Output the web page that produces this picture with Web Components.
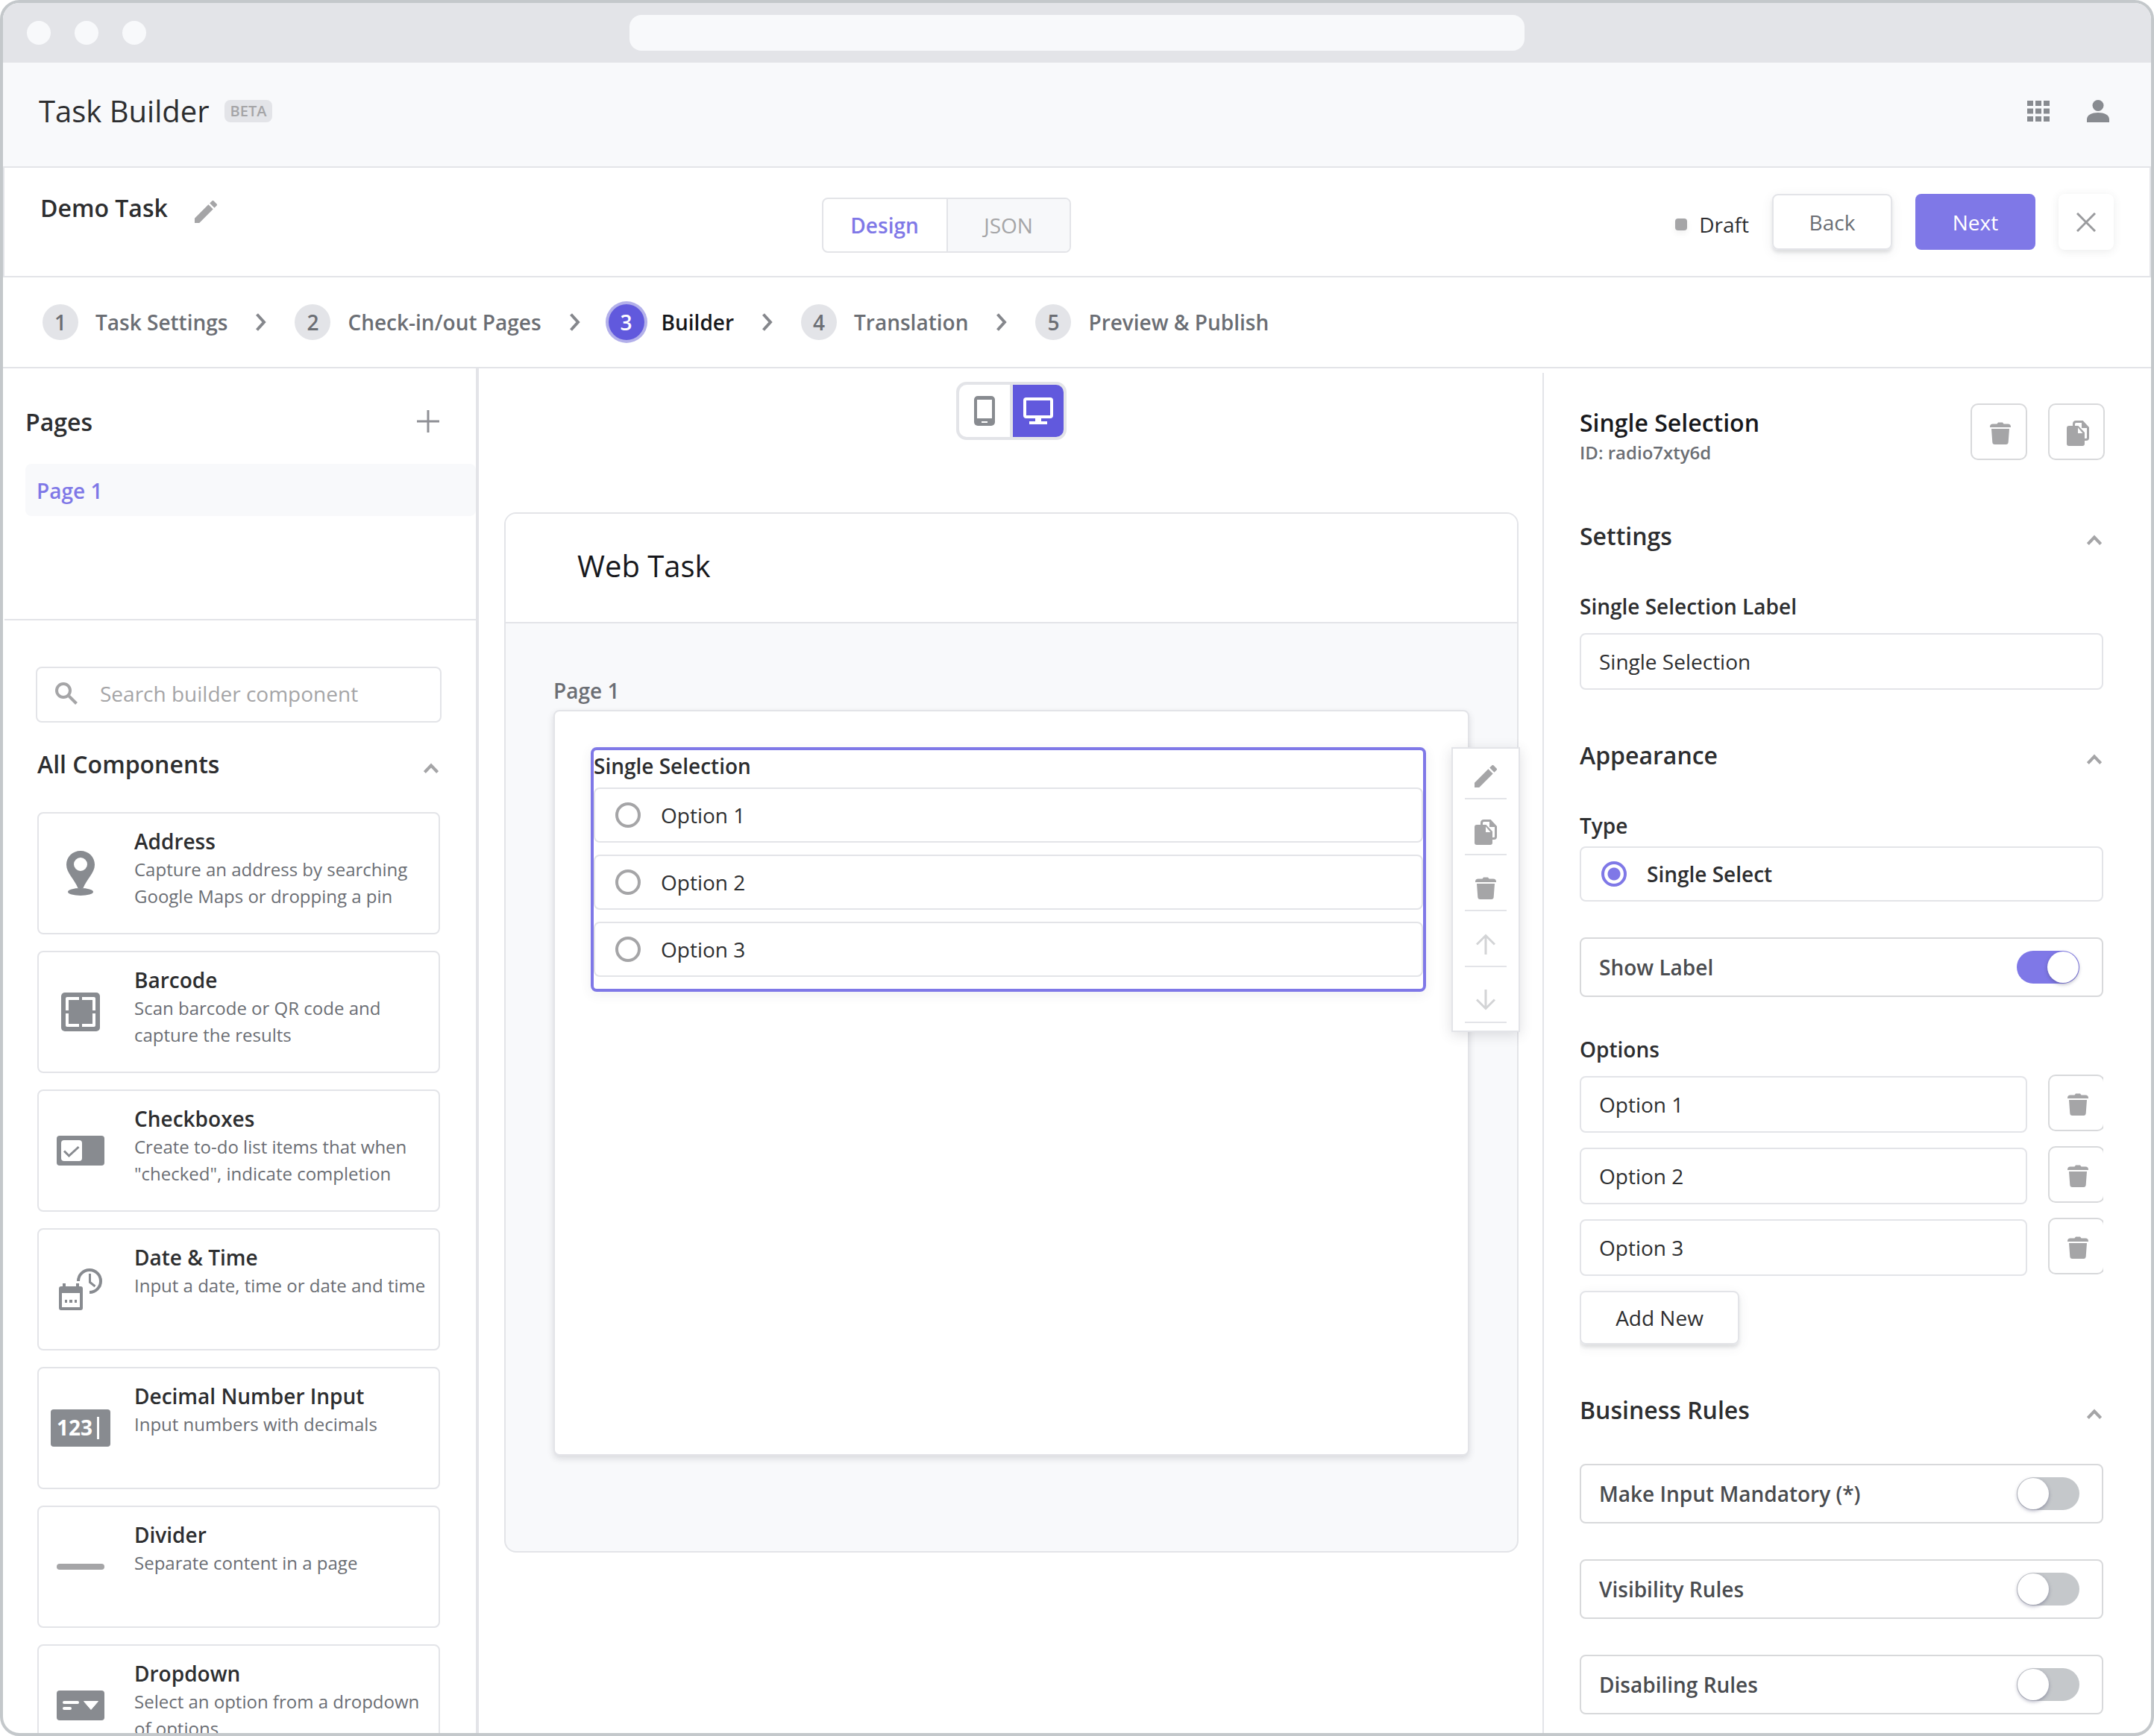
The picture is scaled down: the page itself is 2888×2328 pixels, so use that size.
<!DOCTYPE html>
<html lang="en">
<head>
<meta charset="utf-8">
<title>Task Builder</title>
<style>
  :root {
    --accent: #7f78e7;
    --accent-deep: #6159dd;
    --line: #e3e4e8;
    --line-strong: #d8d9db;
    --surface: #f8f9fb;
    --ink: #2d2e30;
    --ink-soft: #4a4c50;
    --muted: #6b6e74;
    --faint: #a5a5a7;
    --icon: #888b90;
  }
  body { margin: 0; background: #fff; color: var(--ink); font: 28px/40px "Open Sans", "Noto Sans", sans-serif; }
</style>
</head>
<body>
<app-window>
  <app-header></app-header>
  <task-bar></task-bar>
  <step-nav></step-nav>
  <builder-body>
    <builder-sidebar slot="left">
      <component-card icon="pin"><span slot="title">Address</span>Capture an address by searching Google Maps or dropping a pin</component-card>
      <component-card icon="barcode"><span slot="title">Barcode</span>Scan barcode or QR code and capture the results</component-card>
      <component-card icon="checkboxes"><span slot="title">Checkboxes</span>Create to-do list items that when "checked", indicate completion</component-card>
      <component-card icon="datetime"><span slot="title">Date &amp; Time</span>Input a date, time or date and time</component-card>
      <component-card icon="number"><span slot="title">Decimal Number Input</span>Input numbers with decimals</component-card>
      <component-card icon="divider"><span slot="title">Divider</span>Separate content in a page</component-card>
      <component-card icon="dropdown"><span slot="title">Dropdown</span>Select an option from a dropdown of options</component-card>
    </builder-sidebar>
    <design-canvas></design-canvas>
    <settings-panel slot="right"></settings-panel>
  </builder-body>
</app-window>

<script>
const ICONS = {
  pencil: [30, 30, '<svg viewBox="3 3 18 18" width="30" height="30" fill="currentColor"><path d="M3 17.25V21h3.75L17.81 9.94l-3.75-3.75L3 17.25zM20.71 7.04a1 1 0 0 0 0-1.41l-2.34-2.34a1 1 0 0 0-1.41 0l-1.83 1.83 3.75 3.75 1.83-1.83z"/></svg>'],
  trash: [28, 30, '<path fill="currentColor" d="M4 2.5h5.500l1.500-2h6l1.500 2H24q4 0 4 4v.5H0v-.5q0-4 4-4zM2 9h24l-1.300 17.800Q24.500 30 21.500 30h-15Q3.500 30 3.300 26.800z"/>'],
  copy: [30, 34, '<path fill="none" stroke="currentColor" stroke-width="3" d="M9.500 7V4.500q0-3 3-3H21l7.500 8V23q0 2.500-2.500 2.500h-2"/><path fill="currentColor" d="M20 1v9h9zM3 7h12.500L24 16v15q0 3-3 3H3q-3 0-3-3V10q0-3 3-3z"/><path fill="#fff" d="M15 9.500l6.500 7.500H15z"/>'],
  search: [30, 30, '<g fill="none" stroke="currentColor" stroke-width="4"><circle cx="11" cy="11" r="9"/><path d="M18.500 18.500L28.500 28.500"/></g>'],
  plus: [30, 30, '<path stroke="currentColor" stroke-width="3" d="M15 0v30M0 15h30"/>'],
  close: [26, 26, '<path stroke="currentColor" stroke-width="3" d="M1 1l24 24M25 1L1 25"/>'],
  chevronRight: [14, 24, '<path fill="none" stroke="currentColor" stroke-width="4" d="M1.500 1.500L11 12 1.500 22.500"/>'],
  chevronUp: [20, 24, '<path fill="none" stroke="currentColor" stroke-width="4" d="M1.400 22.500L10 13.500l8.600 9"/>'],
  arrowUp: [26, 28, '<path fill="none" stroke="currentColor" stroke-width="3" d="M1 14.500L13 2.500l12 12M13 2.500V28"/>'],
  arrowDown: [26, 28, '<path fill="none" stroke="currentColor" stroke-width="3" d="M1 13.500l12 12 12-12M13 25.500V0"/>'],
  grid: [30, 28, [0, 11, 22].map(x => [0, 10.5, 21].map(y => `<rect x="${x}" y="${y}" width="8" height="7" fill="currentColor"/>`).join('')).join('')],
  person: [30, 30, '<circle cx="15" cy="7.500" r="7.500" fill="currentColor"/><path fill="currentColor" d="M0 30v-4c0-6 7-9 15-9s15 3 15 9v4z"/>'],
  tablet: [28, 40, '<rect width="28" height="40" rx="5" fill="currentColor"/><path fill="#fff" d="M4 5h20v25H4zM10 34h8v2h-8z"/>'],
  monitor: [40, 36, '<rect x="2" y="2" width="36" height="24" rx="2" fill="none" stroke="currentColor" stroke-width="4"/><path fill="currentColor" d="M16 27h8v5h8v4H8v-4h8z"/>'],
  pin: [38, 60, '<path fill="currentColor" fill-rule="evenodd" d="M19 0C8.500 0 0 8 0 18.500 0 30 11 38 15.500 50h7C27 38 38 30 38 18.500 38 8 29.500 0 19 0zm0 9a9 9 0 1 1 0 18 9 9 0 0 1 0-18z"/><ellipse cx="19" cy="55" rx="17" ry="5" fill="currentColor"/>'],
  barcode: [52, 52, '<rect width="52" height="52" rx="5" fill="currentColor"/><path fill="none" stroke="#fff" stroke-width="4" stroke-linejoin="round" d="M24 8H8v16M28 8h16v16M8 28v16h16M44 28v16H28"/>'],
  checkboxes: [64, 40, '<rect width="64" height="40" rx="4" fill="currentColor"/><rect x="6" y="6" width="28" height="28" rx="4" fill="#fff"/><path fill="none" stroke="currentColor" stroke-width="3" d="M10 20.500l6.500 6.500L29.500 15"/>'],
  datetime: [58, 58, '<path fill="none" stroke="currentColor" stroke-width="4" d="M26 18a15 15 0 1 1 15 15"/><path fill="none" stroke="currentColor" stroke-width="3" d="M41.500 8v11.500l7 5.500"/><path fill="currentColor" fill-rule="evenodd" d="M5 21h4v4h14v-4h4v4h2q3 0 3 3v26q0 3-3 3H3q-3 0-3-3V28q0-3 3-3h2zM4 34v19h24V34z"/><path fill="currentColor" d="M8 43h3v4H8zM14 43h4v4h-4zM21 43h3v4h-3z"/>'],
  number: [80, 50, '<rect width="80" height="50" rx="4" fill="currentColor"/><text x="8" y="35" fill="#fff" font-size="28" font-weight="700">123</text><rect x="62" y="10" width="3" height="30" fill="#fff"/>'],
  divider: [64, 8, '<rect width="64" height="8" rx="4" fill="#a5a5a7"/>'],
  dropdown: [64, 40, '<rect width="64" height="40" rx="4" fill="currentColor"/><rect x="8" y="14" width="22" height="4" rx="2" fill="#fff"/><rect x="8" y="22" width="12" height="4" rx="2" fill="#fff"/><path fill="#fff" stroke="#fff" stroke-width="1" stroke-linejoin="round" d="M36.500 14.500h19L46 25.500z"/>']
};

const RESET = `
  *, *::before { box-sizing: border-box; }
  :host { display: block; box-sizing: border-box; }
  h1, h2, h3, p, ol, ul { margin: 0; padding: 0; list-style: none; font-weight: inherit; font-size: inherit; }
  button { font: inherit; color: inherit; background: none; border: 0; padding: 0; margin: 0; display: inline-flex; align-items: center; justify-content: center; }
  input { font: inherit; color: inherit; margin: 0; }
`;

function define(name, css, html) {
  customElements.define(name, class extends HTMLElement {
    constructor() {
      super();
      this.attachShadow({ mode: 'open' });
    }
    connectedCallback() {
      const markup = typeof html === 'function' ? html(this) : html;
      this.shadowRoot.innerHTML = `<style>${RESET}${css}</style>${markup}`;
    }
  });
}

define('ui-icon', `
  :host { display: inline-flex; flex: none; }
  svg { display: block; }
`, el => {
  const [w, h, body] = ICONS[el.getAttribute('name')];
  return body.startsWith('<svg') ? body : `<svg width="${w}" height="${h}" viewBox="0 0 ${w} ${h}" aria-hidden="true">${body}</svg>`;
});

define('app-window', `
  :host { height: 100vh; display: flex; flex-direction: column; overflow: hidden; border: 4px solid #c4c8cb; border-radius: 26px; background: #fff; }
  .chrome { flex: none; height: 80px; padding: 0 32px; background: var(--line); display: grid; grid-template-columns: 1fr minmax(0, 1200px) 1fr; align-items: center; }
  .dots { display: flex; gap: 32px; }
  .dots i { width: 32px; height: 32px; border-radius: 50%; background: var(--surface); }
  .url { height: 48px; border-radius: 16px; background: var(--surface); }
`, `
  <div class="chrome"><div class="dots"><i></i><i></i><i></i></div><div class="url"></div></div>
  <slot></slot>
`);

define('app-header', `
  :host { flex: none; height: 141px; padding: 0 56px 10px 48px; background: var(--surface); border-bottom: 2px solid var(--line); display: flex; align-items: center; justify-content: space-between; }
  .brand { display: flex; align-items: center; gap: 20px; }
  h1 { font-size: 40px; line-height: 56px; }
  .beta { padding: 0 8px; border-radius: 8px; background: var(--line); color: var(--faint); font-size: 20px; line-height: 30px; font-weight: 600; }
  .actions { display: flex; align-items: center; gap: 50px; color: var(--icon); }
`, `
  <div class="brand"><h1>Task Builder</h1><span class="beta">BETA</span></div>
  <div class="actions"><button aria-label="Apps"><ui-icon name="grid"></ui-icon></button><button aria-label="Account"><ui-icon name="person"></ui-icon></button></div>
`);

define('task-bar', `
  :host { flex: none; height: 147px; padding: 0 48px; border: 2px solid var(--line); border-top: 0; display: flex; align-items: center; justify-content: space-between; }
  .name { display: flex; align-items: flex-end; gap: 36px; padding-bottom: 38px; font-size: 32px; font-weight: 600; }
  .name ui-icon { color: var(--faint); }
  .mode { display: flex; height: 74px; margin-top: 8px; border: 2px solid var(--line); border-radius: 8px; overflow: hidden; }
  .mode button { width: 165px; }
  .mode .on { color: var(--accent); font-weight: 600; }
  .mode .off { color: var(--faint); background: #f7f8fa; border-left: 2px solid var(--line); }
  .right { display: flex; align-items: center; gap: 31px; }
  .status { display: flex; align-items: center; gap: 16px; padding-top: 6px; }
  .status i { width: 16px; height: 16px; border-radius: 4px; background: var(--faint); box-shadow: 0 4px 8px rgba(0, 0, 0, .06); }
  .right button { height: 75px; width: 161px; border-radius: 8px; }
  .back { color: var(--muted); border: 2px solid var(--line); box-shadow: 0 4px 4px rgba(60, 64, 72, .12), 0 4px 16px rgba(60, 64, 72, .08); }
  .next { background: var(--accent); color: #fff; }
  .right .close { width: 74px; color: #9a9b9e; box-shadow: 0 2px 12px rgba(60, 64, 72, .1); }
`, `
  <div class="name"><h2>Demo Task</h2><button aria-label="Rename task"><ui-icon name="pencil"></ui-icon></button></div>
  <div class="mode"><button class="on">Design</button><button class="off">JSON</button></div>
  <div class="right">
    <span class="status"><i></i>Draft</span>
    <button class="back">Back</button>
    <button class="next">Next</button>
    <button class="close" aria-label="Close"><ui-icon name="close"></ui-icon></button>
  </div>
`);

define('step-nav', `
  :host { flex: none; height: 122px; padding: 0 53px; border-bottom: 2px solid var(--line); color: var(--muted); font-weight: 600; }
  ol { display: flex; align-items: center; height: 100%; }
  li { display: flex; align-items: center; gap: 23px; }
  li + li { margin-left: 38px; }
  li ui-icon { margin-left: 15px; color: #85878c; }
  b { width: 48px; height: 48px; border-radius: 50%; background: var(--line); line-height: 48px; text-align: center; font-weight: 600; }
  .on { color: #17181c; }
  .on b { background: var(--accent-deep); color: #fff; box-shadow: 0 0 0 4px #b3b0ea; }
`, () => {
  const steps = ['Task Settings', 'Check-in/out Pages', 'Builder', 'Translation', 'Preview &amp; Publish'];
  return `<ol>${steps.map((s, i) => `<li class="${i === 2 ? 'on' : ''}"><b>${i + 1}</b>${s}${i < 4 ? '<ui-icon name="chevronRight"></ui-icon>' : ''}</li>`).join('')}</ol>`;
});

define('builder-body', `
  :host { flex: 1; min-height: 0; display: grid; grid-template-columns: 638px minmax(0, 1fr) 816px; }
  div { min-width: 0; min-height: 0; overflow: hidden; }
  .left { border-right: 4px solid var(--line); }
  .right { margin-top: 6px; border-left: 2px solid var(--line); }
`, `
  <div class="left"><slot name="left"></slot></div>
  <div><slot></slot></div>
  <div class="right"><slot name="right"></slot></div>
`);

define('section-heading', `
  :host { display: flex; align-items: center; justify-content: space-between; padding-right: 2px; font-size: 32px; line-height: 48px; font-weight: 600; }
  button { color: var(--faint); }
`, `
  <h2><slot></slot></h2><button aria-label="Collapse section"><ui-icon name="chevronUp"></ui-icon></button>
`);

define('builder-sidebar', `
  .pages { padding: 48px 0 138px 28px; margin-left: 2px; border-bottom: 2px solid var(--line); }
  .head { display: flex; align-items: center; justify-content: space-between; padding-right: 49px; font-size: 32px; line-height: 48px; font-weight: 600; }
  .head button { color: #8f9096; padding-bottom: 3px; }
  .page { width: 100%; height: 70px; margin-top: 32px; padding: 2px 15px 0; justify-content: flex-start; border-radius: 8px; background: var(--surface); color: var(--accent); font-weight: 600; }
  .library { padding: 62px 48px 0 46px; }
  .search { display: flex; align-items: center; gap: 30px; height: 75px; margin: 0 -2px; padding: 0 24px 3px; border: 2px solid var(--line); border-radius: 8px; color: var(--faint); }
  input { flex: 1; min-width: 0; border: 0; padding: 0; outline: 0; background: none; }
  input::placeholder { color: var(--faint); opacity: 1; }
  section-heading { margin: 32px 0 40px; }
  .cards { display: flex; flex-direction: column; gap: 22px; }
`, `
  <section class="pages">
    <div class="head"><h2>Pages</h2><button aria-label="Add page"><ui-icon name="plus"></ui-icon></button></div>
    <button class="page">Page 1</button>
  </section>
  <section class="library">
    <label class="search"><ui-icon name="search"></ui-icon><input type="search" placeholder="Search builder component" aria-label="Search builder component"></label>
    <section-heading>All Components</section-heading>
    <div class="cards"><slot></slot></div>
  </section>
`);

define('component-card', `
  :host { height: 164px; border: 2px solid var(--line); border-radius: 8px; display: flex; gap: 16px; }
  .icon { flex: none; width: 112px; display: flex; align-items: center; justify-content: center; color: var(--icon); }
  .text { padding-top: 17px; color: var(--muted); font-size: 24px; line-height: 36px; }
  h3 { color: var(--ink); font-size: 28px; line-height: 40px; font-weight: 600; }
`, el => `
  <div class="icon"><ui-icon name="${el.getAttribute('icon')}"></ui-icon></div>
  <div class="text"><h3><slot name="title"></slot></h3><p><slot></slot></p></div>
`);

const RADIO = `
  input[type=radio] { appearance: none; flex: none; width: 34px; height: 34px; border: 4px solid var(--faint); border-radius: 50%; background: #fff; }
  input[type=radio]:checked { border-color: var(--accent); background: radial-gradient(circle, var(--accent) 0 8px, #fff 9px); }
`;

define('choice-row', `
  :host([strong]) { font-weight: 600; }
  label { display: flex; align-items: center; gap: 27px; height: 74px; padding: 0 27px; border: 2px solid var(--line); border-radius: 8px; }
  ${RADIO}
`, el => `
  <label><input type="radio" ${el.hasAttribute('checked') ? 'checked' : ''}><span><slot></slot></span></label>
`);

define('tool-palette', `
  :host { width: 92px; padding: 8px 16px 10px; border: 2px solid var(--line); background: #fff; box-shadow: 0 4px 16px rgba(60, 64, 72, .16); display: flex; flex-direction: column; gap: 15px; color: var(--faint); }
  button { height: 60px; border-bottom: 2px solid var(--line); }
  button:disabled { color: #d3d4d6; }
`, `
  <button aria-label="Edit"><ui-icon name="pencil"></ui-icon></button>
  <button aria-label="Duplicate"><ui-icon name="copy"></ui-icon></button>
  <button aria-label="Delete"><ui-icon name="trash"></ui-icon></button>
  <button aria-label="Move up" disabled><ui-icon name="arrowUp"></ui-icon></button>
  <button aria-label="Move down" disabled><ui-icon name="arrowDown"></ui-icon></button>
`);

define('design-canvas', `
  :host { padding: 18px 32px 0 34px; display: flex; flex-direction: column; }
  .devices { align-self: center; display: flex; gap: 4px; border: 4px solid var(--line); border-radius: 14px; background: var(--line); overflow: hidden; }
  .devices button { width: 68px; height: 70px; background: #fff; color: var(--icon); }
  .devices .on { background: var(--accent-deep); color: #fff; }
  .task { margin-top: 97px; border: 2px solid var(--line); border-radius: 16px; background: var(--surface); }
  .task h2 { padding: 42px 96px 47px; font-size: 40px; line-height: 56px; color: #17181c; background: #fff; border-radius: 14px 14px 0 0; border-bottom: 2px solid var(--line); }
  .area { padding: 70px 64px 128px; }
  .label { color: var(--muted); font-weight: 600; margin-bottom: 6px; }
  .page { position: relative; min-height: 1000px; padding: 48px 56px 0 48px; border: 2px solid var(--line); border-radius: 8px; background: #fff; box-shadow: 0 4px 8px rgba(60, 64, 72, .16); }
  fieldset { margin: 0; min-width: 0; padding: 0 0 16px; border: 4px solid var(--accent); border-radius: 8px; display: flex; flex-direction: column; gap: 16px; box-shadow: 0 4px 16px rgba(60, 64, 72, .08); }
  h3 { font-weight: 600; line-height: 42px; margin-bottom: -8px; }
  tool-palette { position: absolute; top: 48px; right: -70px; }
`, `
  <div class="devices"><button aria-label="Tablet preview"><ui-icon name="tablet"></ui-icon></button><button class="on" aria-label="Desktop preview"><ui-icon name="monitor"></ui-icon></button></div>
  <section class="task">
    <h2>Web Task</h2>
    <div class="area">
      <p class="label">Page 1</p>
      <div class="page">
        <fieldset aria-label="Single Selection">
          <h3>Single Selection</h3>
          <choice-row>Option 1</choice-row>
          <choice-row>Option 2</choice-row>
          <choice-row>Option 3</choice-row>
        </fieldset>
        <tool-palette></tool-palette>
      </div>
    </div>
  </section>
`);

define('text-field', `
  label { display: block; line-height: 44px; font-weight: 600; margin-bottom: 14px; }
  input { display: block; width: 100%; height: 76px; padding: 0 24px; border: 2px solid var(--line); border-radius: 8px; background: #fff; outline: 0; }
`, el => {
  const label = el.getAttribute('label');
  const value = el.getAttribute('value');
  return label
    ? `<label for="field">${label}</label><input id="field" type="text" value="${value}">`
    : `<input type="text" value="${value}" aria-label="${value}">`;
});

define('icon-button', `
  button { width: 76px; height: 76px; padding: 3px 0 0 3px; border: 2px solid var(--line-strong); border-radius: 10px; color: var(--faint); }
`, el => `<button aria-label="${el.getAttribute('label')}"><ui-icon name="${el.getAttribute('icon')}"></ui-icon></button>`);

define('toggle-row', `
  label { display: flex; align-items: center; justify-content: space-between; height: 80px; padding: 0 30px 0 24px; border: 2px solid var(--line-strong); border-radius: 8px; color: var(--ink-soft); font-weight: 600; }
  input { appearance: none; display: flex; flex: none; width: 84px; height: 44px; padding: 1px; border-radius: 22px; background: #c5c8cb; }
  input::before { content: ""; width: 42px; height: 42px; border-radius: 50%; background: #fff; box-shadow: 0 2px 5px rgba(60, 60, 100, .4); }
  input:checked { background: var(--accent); justify-content: flex-end; }
`, el => `<label><span><slot></slot></span><input type="checkbox" role="switch" ${el.hasAttribute('checked') ? 'checked' : ''}></label>`);

define('settings-panel', `
  :host { padding: 41px 64px 0 48px; }
  header { display: flex; align-items: flex-start; gap: 28px; margin-right: -2px; }
  .title { flex: 1; padding-top: 4px; }
  .title h2 { font-size: 32px; line-height: 44px; font-weight: 600; color: #17181c; }
  .title p { font-size: 24px; line-height: 36px; color: var(--muted); font-weight: 600; }
  section { display: flex; flex-direction: column; gap: 48px; margin-top: 64px; }
  header + section { margin-top: 70px; }
  h3 { font-weight: 600; line-height: 44px; }
  .type h3 { margin-bottom: 6px; }
  .options { display: flex; flex-direction: column; align-items: stretch; gap: 20px; overflow-x: clip; }
  .options h3 { margin-bottom: -6px; }
  .option { display: flex; gap: 28px; margin-right: -2px; }
  .option text-field { flex: 1; }
  .option icon-button { margin: -2px 0 2px; }
  .add { align-self: flex-start; width: 214px; height: 72px; border: 2px solid var(--line); border-radius: 8px; box-shadow: 0 4px 4px rgba(60, 64, 72, .12), 0 4px 16px rgba(60, 64, 72, .08); }
`, `
  <header>
    <div class="title"><h2>Single Selection</h2><p>ID: radio7xty6d</p></div>
    <icon-button icon="trash" label="Delete component"></icon-button>
    <icon-button icon="copy" label="Duplicate component"></icon-button>
  </header>
  <section>
    <section-heading>Settings</section-heading>
    <text-field label="Single Selection Label" value="Single Selection"></text-field>
  </section>
  <section>
    <section-heading>Appearance</section-heading>
    <div class="type"><h3>Type</h3><choice-row strong checked>Single Select</choice-row></div>
    <toggle-row checked>Show Label</toggle-row>
    <div class="options">
      <h3>Options</h3>
      ${[1, 2, 3].map(n => `<div class="option"><text-field value="Option ${n}"></text-field><icon-button icon="trash" label="Delete option ${n}"></icon-button></div>`).join('')}
      <button class="add">Add New</button>
    </div>
  </section>
  <section>
    <section-heading>Business Rules</section-heading>
    <toggle-row>Make Input Mandatory (*)</toggle-row>
    <toggle-row>Visibility Rules</toggle-row>
    <toggle-row>Disabiling Rules</toggle-row>
  </section>
`);
</script>
</body>
</html>
